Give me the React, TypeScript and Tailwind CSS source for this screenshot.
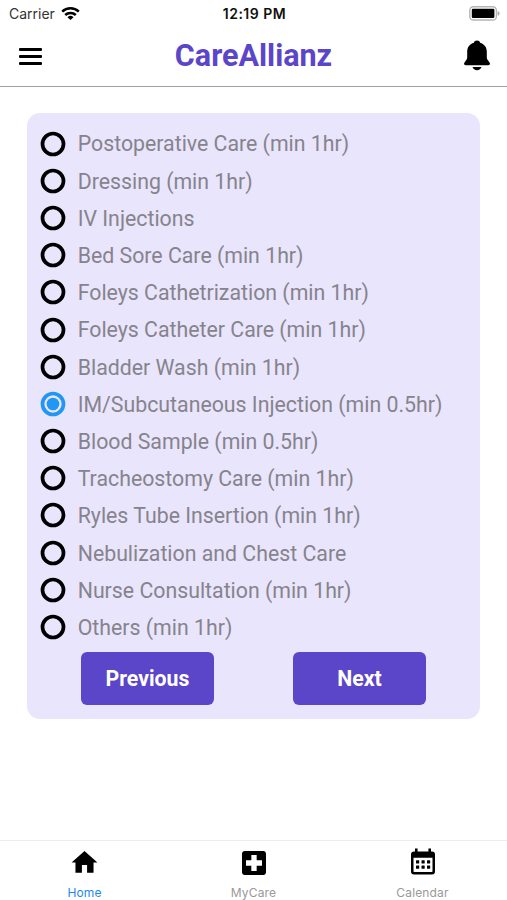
import React, { useState } from 'react';
import { MdHome, MdLocalHospital } from 'react-icons/md';

const services = [
  'Postoperative Care (min 1hr)',
  'Dressing (min 1hr)',
  'IV Injections',
  'Bed Sore Care (min 1hr)',
  'Foleys Cathetrization (min 1hr)',
  'Foleys Catheter Care (min 1hr)',
  'Bladder Wash (min 1hr)',
  'IM/Subcutaneous Injection (min 0.5hr)',
  'Blood Sample (min 0.5hr)',
  'Tracheostomy Care (min 1hr)',
  'Ryles Tube Insertion (min 1hr)',
  'Nebulization and Chest Care',
  'Nurse Consultation (min 1hr)',
  'Others (min 1hr)',
];

const WifiIcon = () => (
  <svg className="w-[19px] h-[14px]" viewBox="0 0 19 14" fill="none" stroke="#000" strokeWidth="2.5">
    <path d="M1.2 4.6a12 12 0 0 1 16.6 0" />
    <path d="M4.2 8a7.7 7.7 0 0 1 10.6 0" />
    <path d="M9.5 13 6.5 10.2a4.3 4.3 0 0 1 6 0Z" fill="#000" stroke="none" />
  </svg>
);

const BatteryIcon = () => (
  <svg className="w-[31px] h-[15px]" viewBox="0 0 31 15">
    <rect x="0.8" y="0.8" width="26.6" height="13.2" rx="3.6" fill="#fff" stroke="#b5b5b5" strokeWidth="1.4" />
    <rect x="2.8" y="2.8" width="22.6" height="9.2" rx="1.2" fill="#000" />
    <path d="M28.6 5v4.8c1.3-.4 2-1.3 2-2.4s-.7-2-2-2.4Z" fill="#aaa" />
  </svg>
);

const BellIcon = () => (
  <svg className="w-[26px] h-[31px]" viewBox="0 0 26 31">
    <path
      d="M13 .6c-1.7 0-2.7.9-3.1 2.1C5.8 3.9 3.2 7 3.2 11.5V17c0 1.5-.5 2.6-1.3 3.6L.5 22.5c-1 1.4-.3 2.7 1.3 2.7h22.4c1.6 0 2.3-1.3 1.3-2.7l-1.4-1.9c-.8-1-1.3-2.1-1.3-3.6v-5.5c0-4.5-2.6-7.6-6.7-8.8C15.7 1.5 14.7.6 13 .6Z"
      fill="#000"
    />
    <path d="M8.5 27.1h9c-.6 1.9-2.3 3.1-4.5 3.1s-3.9-1.2-4.5-3.1Z" fill="#000" />
  </svg>
);

const CalendarIcon = () => (
  <svg className="w-[26px] h-[28px]" viewBox="0 0 26 28">
    <path
      fillRule="evenodd"
      d="M5 .5h2.6v3h10.8v-3H21v3h1a3 3 0 0 1 3 3v17a3 3 0 0 1-3 3H4a3 3 0 0 1-3-3v-17a3 3 0 0 1 3-3h1ZM3.5 9.7v13.5c0 .5.3.8.8.8h17.4c.5 0 .8-.3.8-.8V9.700Z"
      fill="#000"
    />
    {[12.3, 17.5].map((y) =>
      [6, 11.5, 17].map((x) => <rect key={`${x}-${y}`} x={x} y={y} width="3.2" height="3.2" rx="0.5" />)
    )}
  </svg>
);

const Radio = ({ checked }: { checked: boolean }) => (
  <svg className="w-[26px] h-[26px] shrink-0" viewBox="0 0 26 26" fill="none">
    <circle cx="13" cy="13" r="10.5" stroke={checked ? '#2196f3' : '#000'} strokeWidth="3.7" />
    {checked && <circle cx="13" cy="13" r="6.3" fill="#2196f3" />}
  </svg>
);

export default function App() {
  const [selected, setSelected] = useState(7);

  return (
    <div className="w-full h-[900px] flex flex-col bg-white font-['Roboto',sans-serif] overflow-hidden">
      {/* Status bar */}
      <div className="h-[27px] shrink-0 grid grid-cols-3 items-center pl-[9px] pr-[7px] font-['Inter',sans-serif]">
        <div className="flex items-center gap-[6px] text-[14px] text-[#333]">
          <span>Carrier</span>
          <WifiIcon />
        </div>
        <div className="text-center text-[14px] tracking-[0.5px] font-semibold text-[#111] whitespace-nowrap">12:19 PM</div>
        <div className="flex justify-end">
          <BatteryIcon />
        </div>
      </div>

      {/* Header */}
      <header className="h-[60px] shrink-0 flex items-center justify-between pl-[19px] pr-[17px] border-b border-[#a0a0a0]">
        <button className="w-[24px] flex flex-col gap-[4px] pb-[1px]">
          <span className="w-[23px] h-[3px] bg-black rounded-[1px]" />
          <span className="w-[23px] h-[3px] bg-black rounded-[1px]" />
          <span className="w-[23px] h-[3px] bg-black rounded-[1px]" />
        </button>
        <h1 className="text-[30.5px] leading-none font-bold text-[#5b45c9] pb-[1px]">CareAllianz</h1>
        <button className="pb-[2px]">
          <BellIcon />
        </button>
      </header>

      {/* Service list */}
      <main className="flex-1 px-[27px] pt-[26px]">
        <div className="h-[606px] bg-[#e9e5fc] rounded-[13px] pt-[12px] pl-[13px]">
          {services.map((service, index) => (
            <button
              key={service}
              onClick={() => setSelected(index)}
              className="w-full h-[37.2px] flex items-center gap-[11.7px] text-left"
            >
              <Radio checked={selected === index} />
              <span className="text-[21.3px] leading-none pt-[1px] text-[#86838c] whitespace-nowrap">{service}</span>
            </button>
          ))}
          <div className="flex gap-[79px] pl-[41px] pt-[6px]">
            <button className="w-[133px] h-[53px] pt-[2px] rounded-[6px] bg-[#5b45c9] text-white text-[21.3px] font-bold">
              Previous
            </button>
            <button className="w-[133px] h-[53px] pt-[2px] rounded-[6px] bg-[#5b45c9] text-white text-[21.3px] font-bold">
              Next
            </button>
          </div>
        </div>
      </main>

      {/* Tab bar */}
      <nav className="h-[60px] shrink-0 grid grid-cols-3 border-t border-[#ececec] font-['Inter',sans-serif] text-[12px] tracking-[0.15px] text-[#999]">
        <div className="flex flex-col items-center">
          <div className="h-[43px] flex items-center">
            <MdHome className="w-[31px] h-[31px] text-black" />
          </div>
          <span className="leading-[17px] text-[#1e88f0]">Home</span>
        </div>
        <div className="flex flex-col items-center">
          <div className="h-[43px] flex items-center">
            <MdLocalHospital className="w-[32px] h-[32px] text-black" />
          </div>
          <span className="leading-[17px]">MyCare</span>
        </div>
        <div className="flex flex-col items-center">
          <div className="h-[43px] pb-[2px] flex items-center">
            <CalendarIcon />
          </div>
          <span className="leading-[17px]">Calendar</span>
        </div>
      </nav>
    </div>
  );
}
